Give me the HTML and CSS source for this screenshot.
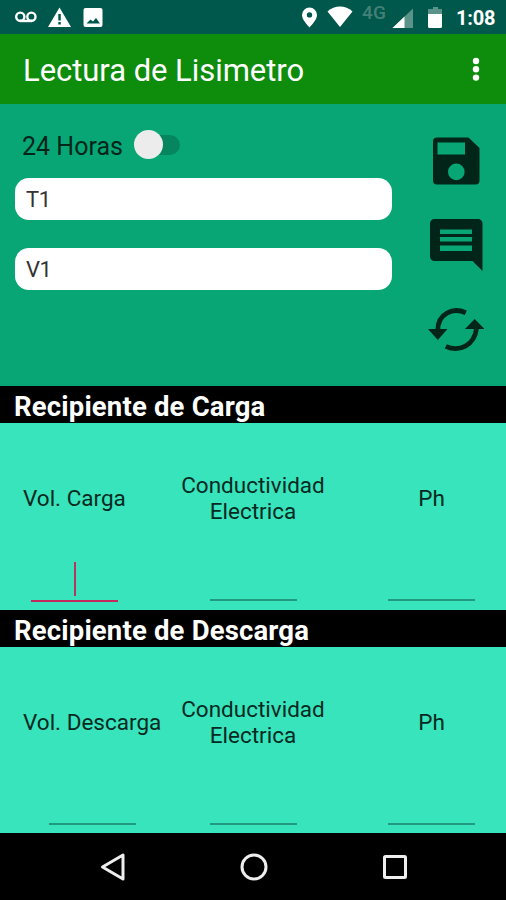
FILE: index.html
```html
<!DOCTYPE html>
<html lang="es">
<head>
<meta charset="utf-8">
<title>Lectura de Lisimetro</title>
<link rel="stylesheet" href="styles.css">
</head>
<body>
<div class="screen">
  <div class="status">
    <svg class="status-left" width="110" height="34" viewBox="0 0 110 34">
      <g fill="none" stroke="#fff" stroke-width="2.4"><circle cx="20.3" cy="16.7" r="4.1"/><circle cx="31.4" cy="16.7" r="4.1"/><path d="M20 21h12"/></g>
      <path fill="#fff" fill-rule="evenodd" d="M59.5 7.5L71 27H48zM58.3 14v6.5h2.5V14zM58.3 22v2.5h2.5V22z"/>
      <path fill="#fff" fill-rule="evenodd" d="M85.500 8h15a2 2 0 0 1 2 2v15a2 2 0 0 1-2 2h-15a2 2 0 0 1-2-2V10a2 2 0 0 1 2-2zM86.500 23.500h13.500l-4-5.500-3 3.500-2.500-2z"/>
    </svg>
    <svg class="status-right" width="68" height="34" viewBox="0 0 68 34">
      <path fill="#fff" fill-rule="evenodd" d="M17.500 7.500a7.500 7.500 0 0 1 7.500 7.500c0 4.500-5 9.500-7.500 12.500-2.500-3-7.500-8-7.500-12.500a7.500 7.500 0 0 1 7.500-7.500zM17.500 12.200a2.700 2.700 0 1 0 0 5.400 2.700 2.700 0 0 0 0-5.400z"/>
      <path fill="#fff" d="M48 27L35.500 11.500Q41 6.500 48 6.500T60.500 11.500z"/>
    </svg>
    <span class="network">4G</span>
    <svg width="58" height="34" viewBox="0 0 58 34">
      <path fill="#5b928a" d="M23 8.500V28H2.500z"/><path fill="#fff" d="M14.500 16.600V28h-12z"/>
      <path fill="#5b928a" d="M43 7h5v2h4v5H38V9h5z"/><path fill="#fff" d="M38 14h14v12.500a1.500 1.500 0 0 1-1.500 1.500h-11a1.500 1.500 0 0 1-1.500-1.500z"/>
    </svg>
    <span class="clock">1:08</span>
  </div>
  <header class="appbar">
    <h1>Lectura de Lisimetro</h1>
    <svg width="12" height="30" viewBox="0 0 12 30" fill="#fff"><circle cx="6" cy="7" r="3.200"/><circle cx="6" cy="15.300" r="3.200"/><circle cx="6" cy="23.600" r="3.200"/></svg>
  </header>
  <section class="form">
    <div class="inputs">
      <div class="toggle"><span>24 Horas</span><i class="switch"></i></div>
      <div class="field">T1</div>
      <div class="field">V1</div>
    </div>
    <div class="actions">
      <svg width="56" height="56" viewBox="0 0 56 56"><path fill="#02251a" fill-rule="evenodd" d="M9 4.500h31.500L51.500 15v32.500a4 4 0 0 1-4 4H9a4 4 0 0 1-4-4v-39a4 4 0 0 1 4-4zM9.500 9.500v12H37v-12zM28.300 30.600a8.300 8.300 0 1 0 0 16.600 8.300 8.300 0 0 0 0-16.600z"/></svg>
      <svg width="56" height="56" viewBox="0 0 56 56"><path fill="#02251a" fill-rule="evenodd" d="M6.500 2h43.500a4.500 4.500 0 0 1 4.500 4.500V54L44.500 44H6.500A4.500 4.500 0 0 1 2 39.500v-33A4.500 4.500 0 0 1 6.500 2zM12 12.500v4.500h32v-4.500zM12 20v4.500h32V20zM12 28.500V34h32v-5.500z"/></svg>
      <svg width="56" height="56" viewBox="0 0 56 56"><g fill="none" stroke="#02251a" stroke-width="4.800"><path d="M37.800 11.700C25 6 9.500 12.500 9.800 29.500"/><path d="M17.800 45.300C31 51.500 46.500 44.500 48.500 27.500"/></g><path fill="#02251a" d="M0 28h19.500L9.800 39zM37 28h19.500L46.700 18z"/></svg>
    </div>
  </section>
  <h2>Recipiente de Carga</h2>
  <section class="readings">
    <div class="reading first"><div class="label">Vol. Carga</div><div class="entry active"><i class="caret"></i></div></div>
    <div class="reading"><div class="label">Conductividad<br>Electrica</div><div class="entry"></div></div>
    <div class="reading last"><div class="label">Ph</div><div class="entry"></div></div>
  </section>
  <h2>Recipiente de Descarga</h2>
  <section class="readings">
    <div class="reading first"><div class="label">Vol. Descarga</div><div class="entry"></div></div>
    <div class="reading"><div class="label">Conductividad<br>Electrica</div><div class="entry"></div></div>
    <div class="reading last"><div class="label">Ph</div><div class="entry"></div></div>
  </section>
  <nav class="nav">
    <svg width="30" height="30" viewBox="0 0 30 30"><path d="M25 3v24L4.500 15z"/></svg>
    <svg width="30" height="30" viewBox="0 0 30 30"><circle cx="15" cy="15" r="12"/></svg>
    <svg width="30" height="30" viewBox="0 0 30 30"><rect x="4.500" y="4.500" width="21" height="21" rx="1"/></svg>
  </nav>
</div>
</body>
</html>
```
FILE: styles.css
```css
* { box-sizing: border-box; }
body { margin: 0; font-family: Roboto, sans-serif; background: #000; }
svg { display: block; flex: none; }
h1, h2 { margin: 0; white-space: nowrap; }
.screen { width: 506px; height: 900px; overflow: hidden; display: flex; flex-direction: column; }
.status { height: 34px; flex: none; display: flex; background: #00574b; color: #fff; }
.status-right { margin-left: 182px; }
.network { width: 30px; padding-left: 2px; font-size: 19px; font-weight: 500; line-height: 26px; letter-spacing: .3px; color: #438077; }
.clock { padding-left: 8px; font-size: 20px; font-weight: 700; line-height: 36px; letter-spacing: -.2px; }
.appbar { height: 70px; flex: none; display: flex; align-items: center; justify-content: space-between; padding: 0 24px 0 23px; background: #0e8c0c; color: #fff; }
h1 { font-size: 31px; font-weight: 400; line-height: 36px; padding-top: 4px; letter-spacing: -.05px; }
.form { height: 282px; flex: none; display: flex; justify-content: space-between; background: #08a675; }
.inputs { width: 392px; padding: 24px 0 0 15px; }
.toggle { height: 36px; margin-bottom: 14px; padding-left: 7px; display: flex; align-items: center; font-size: 25px; color: #02251a; }
.toggle span { width: 112px; white-space: nowrap; }
.switch { width: 46px; height: 20px; margin-top: -3px; border-radius: 10px; background: linear-gradient(90deg, transparent 10px, #06865f 10px); display: flex; align-items: center; }
.switch::before { content: ""; width: 29px; height: 29px; border-radius: 50%; background: #ececec; }
.field { height: 42px; margin-bottom: 28px; padding-left: 11px; border-radius: 14px; background: #fff; color: #333; font-size: 22px; line-height: 43px; letter-spacing: -.5px; }
.actions { width: 78px; padding-top: 29px; display: flex; flex-direction: column; gap: 28px; }
h2 { height: 37px; flex: none; padding-left: 14px; background: #000; color: #fff; font-size: 27.5px; font-weight: 700; line-height: 41px; letter-spacing: .17px; }
.readings { height: 187px; flex: none; display: grid; grid-template-columns: 170px 166px 170px; background: #37e4bc; }
.readings:last-of-type { height: 186px; }
.reading { display: flex; flex-direction: column; align-items: center; padding-top: 48px; }
.first { justify-self: start; padding-left: 23px; }
.last { padding-left: 21px; }
.label { height: 53px; display: flex; align-items: center; text-align: center; white-space: nowrap; font-size: 22.5px; line-height: 26px; color: #05291f; }
.first .label, .last .label { padding-top: 1px; }
.entry { width: 87px; height: 77px; display: flex; justify-content: center; align-items: flex-end; border-bottom: 2px solid #20997e; }
.active { height: 78px; border-bottom: 2px solid #c4285c; }
.caret { width: 2px; height: 34px; margin: 0 0 4px 2px; background: #b43660; }
.nav { height: 67px; flex: none; display: flex; align-items: center; justify-content: center; gap: 111px; padding-left: 1px; background: #000; }
.nav svg { fill: none; stroke: #eee; stroke-width: 3; stroke-linejoin: round; }
```
